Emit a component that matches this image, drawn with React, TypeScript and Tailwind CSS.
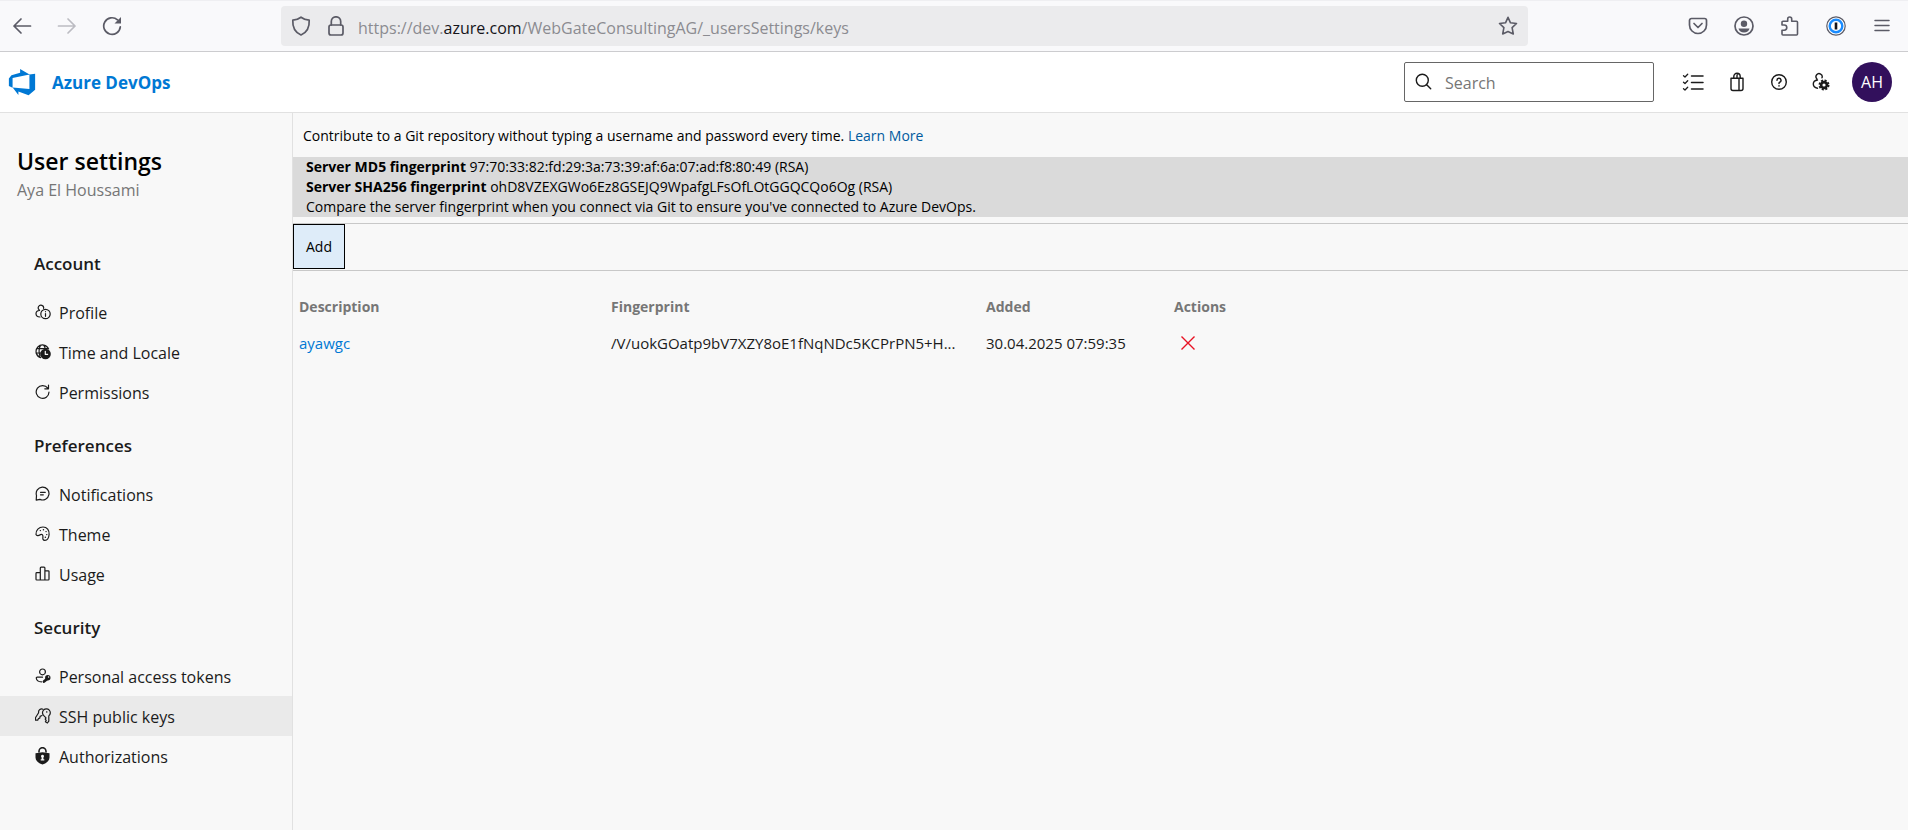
import React, { type ReactNode } from "react";

function Icon({ size = 16, className = "", children }: { size?: number; className?: string; children: ReactNode }) {
  return (
    <svg
      width={size}
      height={size}
      viewBox={`0 0 ${size} ${size}`}
      fill="none"
      stroke="currentColor"
      strokeWidth="1.2"
      strokeLinecap="round"
      strokeLinejoin="round"
      aria-hidden="true"
      className={`block shrink-0 ${className}`}
    >
      {children}
    </svg>
  );
}

const ProfileIcon = () => (
  <Icon>
    <path d="M4.300 6a2.700 2.700 0 1 1 4.300-1.600M4.600 6.500C2 6.600 1 8.300 1 9.800c0 2 1.500 3.100 4 3.200" />
    <circle cx="10.500" cy="10" r="4.700" />
    <path d="M10.500 9.500v2.800M10.500 7.500v.2" />
  </Icon>
);
const LocaleIcon = () => (
  <Icon>
    <path d="M5.500 13.600A6.500 6.500 0 1 1 13.600 5M2 4.600h10.500M1 9h4.500M5.600 1.300C4 4 3.600 8 5 12M8.600 1.100c.9 1 1.400 2.300 1.600 3.600" />
    <circle cx="10.500" cy="10" r="5.300" fill="currentColor" stroke="none" />
    <path d="M10.300 7.300v3.100h2.300" stroke="#f8f8f8" />
  </Icon>
);
const PermissionsIcon = () => (
  <Icon>
    <path d="M12.800 4.200A6.400 6.400 0 1 0 14 8M13.500 1v3.800H9.800" />
  </Icon>
);
const NotificationsIcon = () => (
  <Icon>
    <path d="M1.200 14.200l.3-4.700A6.400 6.400 0 1 1 5 13.400zM5.500 6.300h4.800M5.500 8.800h2.800" />
  </Icon>
);
const ThemeIcon = () => (
  <Icon>
    <path d="M1 8.500C.6 4 4 1 8 1c4 0 6.500 3 6.100 7.500-.3 3.500-2 5.800-4.200 5.800-2 0-2.300-1.400-2-3.200.3-2-.6-3.300-2.400-2.500-1.800.9-3.700 1.700-4.500-.1z" />
    <path d="M5.300 4.600h.1M8.400 3.800h.1M11 5.600h.1M11.700 8.600h.1M10.300 11.300h.1" strokeWidth="1.400" />
  </Icon>
);
const UsageIcon = () => (
  <Icon>
    <path d="M1 7.500a.8.8 0 0 1 .8-.8h3.500V14H1.800a.8.8 0 0 1-.8-.8zM5.300 2a.9.900 0 0 1 .9-.9h2.800a.9.900 0 0 1 .9.900v12H5.300zM9.900 4.800h3.300a.8.8 0 0 1 .8.8v7.600a.8.8 0 0 1-.8.8H9.900z" />
  </Icon>
);
const TokenIcon = () => (
  <Icon>
    <circle cx="7.500" cy="3.900" r="2.900" />
    <path d="M7.500 9.200H2.200c-.6 0-1 .4-.9 1 .3 2.400 2.300 3.600 5.200 3.600" />
    <path d="M9 13.500l3.300-2.800" strokeWidth="2.800" />
    <circle cx="12.800" cy="9.800" r="2.700" fill="currentColor" stroke="none" />
    <circle cx="13.600" cy="9" r=".7" fill="#f8f8f8" stroke="none" />
  </Icon>
);
const KeysIcon = () => (
  <Icon>
    <path d="M9 7.900a3.900 3.900 0 1 1 4.800 0v5.300l-1.400 1.800-2-1.300.8-1.300-1-1.300.8-1.200zM11.800 3.700v.5" />
    <path d="M8 1.300C5.800.3 3.200 1.700 3.600 4.700L.6 9.500.3 12.200h2.400l.8-1.700 1.300-.4.300-1.700L7 7.500" />
  </Icon>
);
const LockIcon = () => (
  <Icon size={18}>
    <path d="M4 5V4.200a3.500 3.500 0 0 1 7 0V5" strokeWidth="1.600" />
    <path d="M.5 6.300C3 6.300 5 5.300 7.500 5.300s4.500 1 7 1v4.200c0 3.400-3 5.700-7 7.100-4-1.400-7-3.700-7-7.100z" fill="currentColor" stroke="none" />
    <path d="M7.500 7.700a1.500 1.500 0 0 1 .9 2.700V12.200h.9v1.200H5.700v-1.200h.9v-1.800A1.500 1.500 0 0 1 7.500 7.700z" fill="#f8f8f8" stroke="none" />
  </Icon>
);

const groups = [
  {
    title: "Account",
    items: [
      { label: "Profile", icon: <ProfileIcon /> },
      { label: "Time and Locale", icon: <LocaleIcon /> },
      { label: "Permissions", icon: <PermissionsIcon /> },
    ],
  },
  {
    title: "Preferences",
    items: [
      { label: "Notifications", icon: <NotificationsIcon /> },
      { label: "Theme", icon: <ThemeIcon /> },
      { label: "Usage", icon: <UsageIcon /> },
    ],
  },
  {
    title: "Security",
    items: [
      { label: "Personal access tokens", icon: <TokenIcon /> },
      { label: "SSH public keys", icon: <KeysIcon />, active: true },
      { label: "Authorizations", icon: <LockIcon /> },
    ],
  },
];

function BrowserBar() {
  return (
    <div className="flex h-13 items-center border-t border-b border-t-[#efeff2] border-b-[#cccccf] bg-[#f9f9fb] text-[#5b5b66]">
      <div className="flex w-[281px] shrink-0 items-center gap-[25px] pl-3">
        <button type="button" aria-label="Back">
          <Icon size={20}>
            <path d="M18.500 10H2M9 3l-7 7 7 7" strokeWidth="1.700" />
          </Icon>
        </button>
        <button type="button" aria-label="Forward" className="text-[#bcbcc2]">
          <Icon size={20}>
            <path d="M1.500 10H18M11 3l7 7-7 7" strokeWidth="1.700" />
          </Icon>
        </button>
        <button type="button" aria-label="Reload">
          <Icon size={20}>
            <path d="M18.300 10.800A8.300 8.300 0 1 1 15.500 3.800" strokeWidth="1.700" />
            <path d="M19 1v6.500h-6.500z" fill="currentColor" stroke="none" />
          </Icon>
        </button>
      </div>
      <div className="flex h-10 min-w-0 flex-1 items-center rounded bg-[#ebebed] px-[10px]">
        <Icon size={20}>
          <path d="M10 1.200c2.500 1.900 5.200 2.800 8.200 3 .4 6.500-2 12-8.200 14.800C3.800 16.200 1.400 10.700 1.800 4.200c3-.2 5.700-1.100 8.200-3z" strokeWidth="1.700" />
        </Icon>
        <Icon size={20} className="ml-[15px]">
          <path d="M5.300 9V5.500a4.700 4.700 0 0 1 9.400 0V9" strokeWidth="1.700" />
          <rect x="3" y="9" width="14" height="10" rx="2" strokeWidth="1.700" />
        </Icon>
        <p className="ml-3 min-w-0 flex-1 truncate pt-[3px] text-base leading-6 text-[#8b8b91]">
          https://dev.<span className="text-[#15141a]">azure.com</span>/WebGateConsultingAG/_usersSettings/keys
        </p>
        <button type="button" aria-label="Bookmark this page">
          <Icon size={20}>
            <path d="M10 1.300l2.500 5.500 6 .7-4.400 4.200 1.200 6.300L10 15.500 4.700 18l1.200-6.300L1.500 7.500l6-.7z" strokeWidth="1.600" />
          </Icon>
        </button>
      </div>
      <div className="flex w-[380px] shrink-0 items-center justify-end gap-[26px] pr-4">
        <button type="button" aria-label="Pocket">
          <Icon size={20}>
            <path d="M3.500 2.500h13a2 2 0 0 1 2 2V9a8.500 8.500 0 0 1-17 0V4.500a2 2 0 0 1 2-2zM6 7.500l4 4 4-4" strokeWidth="1.700" />
          </Icon>
        </button>
        <button type="button" aria-label="Account">
          <Icon size={20}>
            <circle cx="10" cy="10" r="9" strokeWidth="1.700" />
            <circle cx="10" cy="7.800" r="3.200" fill="currentColor" stroke="none" />
            <path d="M4.500 12.500h11c-.6 2.800-2.700 4-5.500 4s-4.900-1.200-5.500-4z" fill="currentColor" stroke="none" />
          </Icon>
        </button>
        <button type="button" aria-label="Extensions">
          <Icon size={20}>
            <path d="M2 9V6.300a1 1 0 0 1 1-1h4.700V3a2 2 0 0 1 4 0v2.300h4.800a1 1 0 0 1 1 1V18a1 1 0 0 1-1 1H3a1 1 0 0 1-1-1v-3.800h2.200a2.600 2.600 0 0 0 0-5.200z" strokeWidth="1.600" />
          </Icon>
        </button>
        <button type="button" aria-label="1Password">
          <Icon size={20}>
            <circle cx="10" cy="10" r="9.200" stroke="#5b5b66" strokeWidth="1.200" fill="#fff" />
            <circle cx="10" cy="10" r="6.300" stroke="#1a8cff" strokeWidth="2.400" />
            <path d="M10 6.500v7" stroke="#15141a" strokeWidth="2.600" strokeLinecap="butt" />
          </Icon>
        </button>
        <button type="button" aria-label="Open menu">
          <Icon size={20}>
            <path d="M3 4.500h14M3 9.500h14M3 14.500h14" strokeWidth="1.500" />
          </Icon>
        </button>
      </div>
    </div>
  );
}

function Header() {
  return (
    <header className="flex h-[61px] items-center border-b border-[#e1e1e1] bg-white pr-4 pl-[7px] text-[#1b1b1b]">
      <a href="#home" className="flex items-center gap-[15px] text-[#0078d4]">
        <svg width="30" height="30" viewBox="0 0 16 16" fill="currentColor" aria-hidden="true" className="block">
          <path d="M15 3.622v8.512L11.500 15l-5.425-1.975v1.958L3.004 10.970l8.951.7V4.005L15 3.622zm-2.984.428L6.994 1v2.001L2.382 4.356 1 6.130v4.029l1.978.873V5.869l9.038-1.818z" />
        </svg>
        <span className="pt-0.5 text-[17px] leading-6 font-bold">Azure DevOps</span>
      </a>
      <div className="ml-auto flex items-center">
        <label className="flex h-10 w-[250px] items-center gap-3 rounded-xs border border-[#666] px-[10px]">
          <Icon size={18}>
            <circle cx="7.300" cy="7.300" r="6" strokeWidth="1.400" />
            <path d="M11.700 11.700l4 4" strokeWidth="1.400" />
          </Icon>
          <input type="search" aria-label="Search" placeholder="Search" className="min-w-0 flex-1 bg-transparent pt-0.5 text-base outline-none placeholder:text-[#767676]" />
        </label>
        <button type="button" aria-label="Work items" className="ml-7">
          <Icon size={22}>
            <path d="M9.500 5H21M9.500 11.500H21M9.500 18H21" strokeWidth="1.500" />
            <path d="M1.500 4.700L3 6l2.700-2.700M1.500 11.200L3 12.500l2.700-2.700M1.500 17.700L3 19l2.700-2.700" strokeWidth="1.300" />
          </Icon>
        </button>
        <button type="button" aria-label="Marketplace" className="ml-[23px]">
          <Icon size={20}>
            <path d="M4 6.300h12v10.200a2 2 0 0 1-2 2H6a2 2 0 0 1-2-2zM12 6.300v12.200M6.800 6.100V4.500a3.200 3.200 0 0 1 6.400 0v1.600M10 6V3.500a1.800 1.800 0 0 1 1.200-1.700" strokeWidth="1.400" />
          </Icon>
        </button>
        <button type="button" aria-label="Help" className="ml-[22px]">
          <Icon size={20}>
            <circle cx="10" cy="10" r="7.300" strokeWidth="1.400" />
            <path d="M8 8.300a2 2 0 1 1 2.700 1.900c-.5.200-.7.600-.7 1.300M10 13.800v.1" strokeWidth="1.500" />
          </Icon>
        </button>
        <button type="button" aria-label="User settings" className="ml-[22px]">
          <Icon size={20}>
            <path d="M5.800 6.800A3.100 3.100 0 1 1 11 5.800M6.500 8C3.700 8.400 2.300 10 2.300 12c0 2.400 1.500 3.800 4.200 4.200" strokeWidth="1.400" />
            <circle cx="13" cy="13" r="2.900" strokeWidth="2.600" />
            <circle cx="13" cy="13" r="4.600" strokeWidth="1.800" strokeDasharray="2.100 1.513" strokeLinecap="butt" />
          </Icon>
        </button>
        <button type="button" aria-label="Account manager" className="ml-[21px] size-10 rounded-full bg-[#32105c] text-base text-white">
          AH
        </button>
      </div>
    </header>
  );
}

function Sidebar() {
  return (
    <aside className="w-[293px] shrink-0 border-r border-[#e1e1e1] text-[#1b1b1b]">
      <div className="px-[17px] pt-8">
        <h1 className="text-[23px] leading-8 font-semibold text-black">User settings</h1>
        <p className="pt-px text-base leading-6 text-[#767676]">Aya El Houssami</p>
      </div>
      <nav aria-label="User settings" className="pt-7">
        {groups.map((group) => (
          <section key={group.title}>
            <h2 className="px-[34px] pt-[22px] pb-4 text-[17px] leading-6 font-semibold">{group.title}</h2>
            <ul>
              {group.items.map((item) => (
                <li key={item.label}>
                  <a href="#settings" className={`flex h-10 items-center pl-[35px] ${item.active ? "bg-[#eaeaea]" : ""}`}>
                    <span className="w-6 shrink-0">{item.icon}</span>
                    <span className="pt-0.5 text-base leading-6">{item.label}</span>
                  </a>
                </li>
              ))}
            </ul>
          </section>
        ))}
      </nav>
    </aside>
  );
}

function Keys() {
  return (
    <main className="min-w-0 flex-1 text-sm">
      <p className="px-[10px] pt-[13px] pb-[11px] leading-5 text-black">
        Contribute to a Git repository without typing a username and password every time.{" "}
        <a href="#learn-more" className="text-[#005a9e]">
          Learn More
        </a>
      </p>
      <div className="bg-[#dadada] px-[13px] leading-5 text-black">
        <p>
          <strong>Server MD5 fingerprint</strong> 97:70:33:82:fd:29:3a:73:39:af:6a:07:ad:f8:80:49 (RSA)
        </p>
        <p>
          <strong>Server SHA256 fingerprint</strong> ohD8VZEXGWo6Ez8GSEJQ9WpafgLFsOfLOtGGQCQo6Og (RSA)
        </p>
        <p>Compare the server fingerprint when you connect via Git to ensure you've connected to Azure DevOps.</p>
      </div>
      <div className="mt-[6px] flex h-12 border-y border-[#c8c8c8]">
        <button type="button" className="h-[45px] w-13 border border-black bg-[#deecf9] text-black">
          Add
        </button>
      </div>
      <table className="mt-[18px] table-fixed text-left leading-5 text-[#1b1b1b]">
        <colgroup>
          <col className="w-[312px]" />
          <col className="w-[375px]" />
          <col className="w-[188px]" />
          <col className="w-[100px]" />
        </colgroup>
        <thead className="text-[#767676]">
          <tr className="h-9">
            <th className="px-[6px] font-bold">Description</th>
            <th className="px-[6px] font-bold">Fingerprint</th>
            <th className="px-[6px] font-bold">Added</th>
            <th className="px-[6px] font-bold">Actions</th>
          </tr>
        </thead>
        <tbody>
          <tr className="h-9 text-[15px]">
            <td className="px-[6px]">
              <a href="#ayawgc" className="text-[#0078d4]">
                ayawgc
              </a>
            </td>
            <td className="px-[6px] whitespace-nowrap">/V/uokGOatp9bV7XZY8oE1fNqNDc5KCPrPN5+H...</td>
            <td className="px-[6px] whitespace-nowrap">30.04.2025 07:59:35</td>
            <td className="px-3">
              <button type="button" aria-label="Delete ayawgc" className="block text-[#e81123]">
                <Icon>
                  <path d="M1.500 1.500l13 13M14.500 1.500l-13 13" strokeWidth="1.400" strokeLinecap="butt" />
                </Icon>
              </button>
            </td>
          </tr>
        </tbody>
      </table>
    </main>
  );
}

export default function App() {
  return (
    <div className="flex min-h-screen flex-col bg-[#f8f8f8] font-['Open_Sans','Noto_Sans',sans-serif]">
      <BrowserBar />
      <Header />
      <div className="flex flex-1">
        <Sidebar />
        <Keys />
      </div>
    </div>
  );
}
